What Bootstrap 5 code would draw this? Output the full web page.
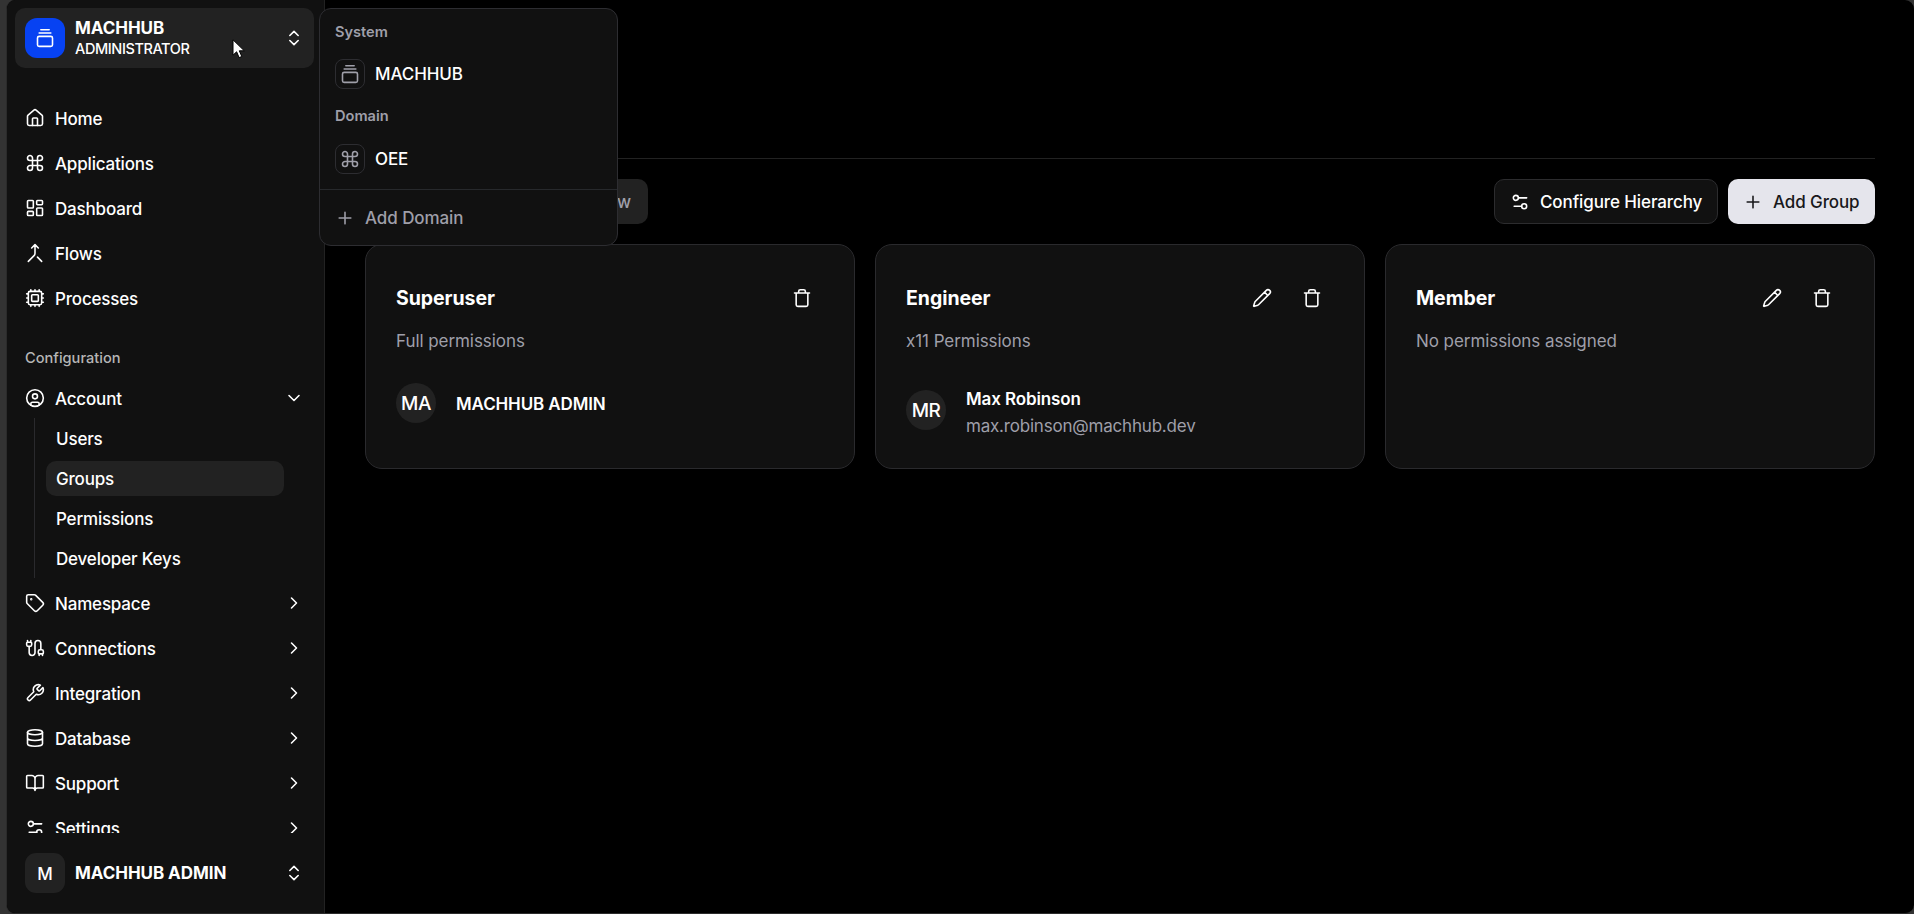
<!DOCTYPE html>
<html lang="en" data-bs-theme="dark">
<head>
<meta charset="utf-8">
<title>MACHHUB – Groups</title>
<link rel="stylesheet" href="https://cdn.jsdelivr.net/npm/bootstrap@5.3.0/dist/css/bootstrap.min.css">
<style>
  :root { --panel:#111111; --raised:#222222; --line:#2a2a2d; --muted:#9f9fa9; }
  html, body { height:100%; }
  body { background:#333; color:#fff; font-family:Inter,"Liberation Sans",sans-serif; font-size:17px; line-height:25px; font-weight:500; letter-spacing:-.18px; overflow:hidden; }
  a { color:inherit; text-decoration:none; }
  svg.ic { width:20px; height:20px; flex:none; fill:none; stroke:currentColor; stroke-width:1.9; stroke-linecap:round; stroke-linejoin:round; display:block; }
  .lbl { padding-top:2px; line-height:23px; white-space:nowrap; }
  .window { margin-left:6px; height:914px; background:#000; border:solid #2b2b2b; border-width:0 0 1px 1px; border-radius:9px; overflow:hidden; }
  .sidebar { width:318px; flex:none; background:var(--panel); border-right:1px solid var(--raised); }
  .team { margin:8px 10px 0 8px; height:60px; padding:0 10px; background:var(--raised); border-radius:10px; }
  .logo { width:40px; height:40px; border-radius:12px; background:#0742f2; }
  .team-text { padding-left:10px; }
  .team-name { font-weight:700; line-height:21px; letter-spacing:-.05px; padding-top:1px; }
  .team-role { font-size:14.5px; line-height:20px; letter-spacing:-.4px; }
  .tree { height:765px; overflow:hidden; padding:30px 20px 0 18px; }
  .tree-item { height:40px; margin-bottom:5px; gap:10px; }
  .group-label { height:40px; margin:20px 0 0; font-size:14.6px; color:#b6b6b6; letter-spacing:0; }
  .subtree { margin:0 20px 5px 9px; height:160px; padding:2.5px 0 0 11px; border-left:1px solid var(--line); }
  .subtree a { height:35px; margin-bottom:5px; padding-left:10px; border-radius:10px; }
  .subtree a.current { background:var(--raised); }
  .account { height:80px; padding:0 20px 0 18px; }
  .initial { width:40px; height:40px; background:var(--raised); border-radius:11px; }
  .content-area { padding:158px 39px 0 40px; min-width:0; }
  .toolbar { border-top:1px solid var(--raised); padding-top:20px; height:86px; }
  .switcher { width:283px; height:45px; padding:0 17px; background:var(--raised); border-radius:10px; color:var(--muted); }
  .btn.act { height:45px; padding:0 15px; border-radius:10px; font:inherit; font-weight:500; letter-spacing:-.1px; gap:10px; }
  .act-outline { width:224px; background:var(--panel); border:1px solid #2c2c2e; color:#fff; }
  .act-fill { width:147px; background:#e5e5ec; color:#18181b; border:0; }
  .tiles { display:grid; grid-template-columns:repeat(3,1fr); gap:20px; }
  .tile { height:225px; background:var(--panel); border:1px solid var(--line); border-radius:17px; padding:30px; }
  .tile-title { font-size:19.5px; font-weight:700; margin:0; letter-spacing:-.05px; line-height:25px; }
  .tile-head { height:46px; padding-right:12px; }
  .tile-head .tools { gap:30px; }
  .desc, .mail { font-weight:400; color:var(--muted); }
  .desc { margin:8px 0 29px; line-height:25px; letter-spacing:-.06px; }
  .member { gap:20px; }
  .face { width:40px; height:40px; border-radius:50%; background:var(--raised); font-size:19px; letter-spacing:-.5px; flex:none; }
  .who { font-weight:600; line-height:27px; letter-spacing:-.12px; }
  .who-pair { margin:3px 0 -3px; }
  .who .mail { line-height:27px; letter-spacing:-.2px; }
  .switch-menu { position:absolute; left:319px; top:8px; width:299px; height:238px; padding:5px 0; background:var(--panel); border:1px solid #2d2d31; border-radius:12px; }
  .menu-label { height:35px; padding-left:15px; font-size:14.6px; font-weight:600; color:var(--muted); letter-spacing:0; }
  .menu-label.first { padding-top:2px; }
  .menu-item { height:50px; padding-left:15px; gap:10px; }
  .menu-item .lbl { letter-spacing:-.08px; padding-top:0; }
  .menu-add { color:var(--muted); }
  .chip { width:30px; height:30px; border:1px solid #2d2d31; border-radius:8px; color:var(--muted); }
  .menu-rule { border-top:1px solid #27292c; margin:5px 0 3px; }
  .pointer { position:absolute; left:232px; top:39px; width:15px; height:20px; }
</style>
</head>
<body>
<svg width="0" height="0" class="position-absolute">
  <symbol id="stack" viewBox="0 0 24 24"><path d="M7 2h10M5 6h14"/><rect width="18" height="12" x="3" y="10" rx="2"/></symbol>
  <symbol id="updown" viewBox="0 0 24 24"><path d="m7 15 5 5 5-5M7 9l5-5 5 5"/></symbol>
  <symbol id="right" viewBox="0 0 24 24"><path d="m9 18 6-6-6-6"/></symbol>
  <symbol id="down" viewBox="0 0 24 24"><path d="m6 9 6 6 6-6"/></symbol>
  <symbol id="home" viewBox="0 0 24 24"><path d="M15 21v-8a1 1 0 0 0-1-1h-4a1 1 0 0 0-1 1v8"/><path d="M3 10a2 2 0 0 1 .709-1.528l7-5.999a2 2 0 0 1 2.582 0l7 5.999A2 2 0 0 1 21 10v9a2 2 0 0 1-2 2H5a2 2 0 0 1-2-2z"/></symbol>
  <symbol id="command" viewBox="0 0 24 24"><path d="M15 6v12a3 3 0 1 0 3-3H6a3 3 0 1 0 3 3V6a3 3 0 1 0-3 3h12a3 3 0 1 0-3-3"/></symbol>
  <symbol id="dash" viewBox="0 0 24 24"><rect width="7" height="9" x="3" y="3" rx="1"/><rect width="7" height="5" x="14" y="3" rx="1"/><rect width="7" height="9" x="14" y="12" rx="1"/><rect width="7" height="5" x="3" y="16" rx="1"/></symbol>
  <symbol id="merge" viewBox="0 0 24 24"><path d="m8 6 4-4 4 4M12 2v10.3a4 4 0 0 1-1.172 2.872L4 22M20 22l-5-5"/></symbol>
  <symbol id="cpu" viewBox="0 0 24 24"><path d="M12 20v2M12 2v2M17 20v2M17 2v2M2 12h2M2 17h2M2 7h2M20 12h2M20 17h2M20 7h2M7 20v2M7 2v2"/><rect x="4" y="4" width="16" height="16" rx="2"/><rect x="8" y="8" width="8" height="8" rx="1"/></symbol>
  <symbol id="user" viewBox="0 0 24 24"><circle cx="12" cy="12" r="10"/><circle cx="12" cy="10" r="3"/><path d="M7 20.662V19a2 2 0 0 1 2-2h6a2 2 0 0 1 2 2v1.662"/></symbol>
  <symbol id="tag" viewBox="0 0 24 24"><path d="M12.586 2.586A2 2 0 0 0 11.172 2H4a2 2 0 0 0-2 2v7.172a2 2 0 0 0 .586 1.414l8.704 8.704a2.426 2.426 0 0 0 3.42 0l6.58-6.58a2.426 2.426 0 0 0 0-3.42z"/><circle cx="7.5" cy="7.5" r=".5" fill="currentColor"/></symbol>
  <symbol id="cable" viewBox="0 0 24 24"><path d="M17 19a1 1 0 0 1-1-1v-2a2 2 0 0 1 2-2h2a2 2 0 0 1 2 2v2a1 1 0 0 1-1 1zM17 21v-2M19 14V6.5a1 1 0 0 0-7 0v11a1 1 0 0 1-7 0V10M21 21v-2M3 5V3M4 10a2 2 0 0 1-2-2V6a1 1 0 0 1 1-1h4a1 1 0 0 1 1 1v2a2 2 0 0 1-2 2zM7 5V3"/></symbol>
  <symbol id="wrench" viewBox="0 0 24 24"><path d="M14.7 6.3a1 1 0 0 0 0 1.4l1.6 1.6a1 1 0 0 0 1.4 0l3.77-3.77a6 6 0 0 1-7.94 7.94l-6.91 6.91a2.12 2.12 0 0 1-3-3l6.91-6.91a6 6 0 0 1 7.94-7.94l-3.76 3.76z"/></symbol>
  <symbol id="db" viewBox="0 0 24 24"><ellipse cx="12" cy="5" rx="9" ry="3"/><path d="M3 5V19A9 3 0 0 0 21 19V5M3 12A9 3 0 0 0 21 12"/></symbol>
  <symbol id="book" viewBox="0 0 24 24"><path d="M12 7v14M3 18a1 1 0 0 1-1-1V4a1 1 0 0 1 1-1h5a4 4 0 0 1 4 4 4 4 0 0 1 4-4h5a1 1 0 0 1 1 1v13a1 1 0 0 1-1 1h-6a3 3 0 0 0-3 3 3 3 0 0 0-3-3z"/></symbol>
  <symbol id="sliders" viewBox="0 0 24 24"><path d="M20 7h-9M14 17H5"/><circle cx="17" cy="17" r="3"/><circle cx="7" cy="7" r="3"/></symbol>
  <symbol id="plus" viewBox="0 0 24 24"><path d="M5 12h14M12 5v14"/></symbol>
  <symbol id="trash" viewBox="0 0 24 24"><path d="M3 6h18M19 6v14c0 1-1 2-2 2H7c-1 0-2-1-2-2V6M8 6V4c0-1 1-2 2-2h4c1 0 2 1 2 2v2"/></symbol>
  <symbol id="pencil" viewBox="0 0 24 24"><path d="M21.174 6.812a1 1 0 0 0-3.986-3.987L3.842 16.174a2 2 0 0 0-.5.83l-1.321 4.352a.5.5 0 0 0 .623.622l4.353-1.32a2 2 0 0 0 .83-.497zM15 5l4 4"/></symbol>
</svg>

<div class="window d-flex">
  <aside class="sidebar d-flex flex-column">
    <div class="team d-flex align-items-center">
      <span class="logo d-flex align-items-center justify-content-center"><svg class="ic"><use href="#stack"/></svg></span>
      <div class="team-text flex-grow-1">
        <div class="team-name">MACHHUB</div>
        <div class="team-role">ADMINISTRATOR</div>
      </div>
      <svg class="ic"><use href="#updown"/></svg>
    </div>
    <nav class="tree">
      <a href="#" class="tree-item d-flex align-items-center"><svg class="ic"><use href="#home"/></svg><span class="lbl">Home</span></a>
      <a href="#" class="tree-item d-flex align-items-center"><svg class="ic"><use href="#command"/></svg><span class="lbl">Applications</span></a>
      <a href="#" class="tree-item d-flex align-items-center"><svg class="ic"><use href="#dash"/></svg><span class="lbl">Dashboard</span></a>
      <a href="#" class="tree-item d-flex align-items-center"><svg class="ic"><use href="#merge"/></svg><span class="lbl">Flows</span></a>
      <a href="#" class="tree-item d-flex align-items-center"><svg class="ic"><use href="#cpu"/></svg><span class="lbl">Processes</span></a>
      <div class="group-label d-flex align-items-center">Configuration</div>
      <a href="#" class="tree-item d-flex align-items-center mb-0"><svg class="ic"><use href="#user"/></svg><span class="lbl flex-grow-1">Account</span><svg class="ic"><use href="#down"/></svg></a>
      <div class="subtree">
        <a href="#" class="d-flex align-items-center"><span class="lbl">Users</span></a>
        <a href="#" class="d-flex align-items-center current"><span class="lbl">Groups</span></a>
        <a href="#" class="d-flex align-items-center"><span class="lbl">Permissions</span></a>
        <a href="#" class="d-flex align-items-center"><span class="lbl">Developer Keys</span></a>
      </div>
      <a href="#" class="tree-item d-flex align-items-center"><svg class="ic"><use href="#tag"/></svg><span class="lbl flex-grow-1">Namespace</span><svg class="ic"><use href="#right"/></svg></a>
      <a href="#" class="tree-item d-flex align-items-center"><svg class="ic"><use href="#cable"/></svg><span class="lbl flex-grow-1">Connections</span><svg class="ic"><use href="#right"/></svg></a>
      <a href="#" class="tree-item d-flex align-items-center"><svg class="ic"><use href="#wrench"/></svg><span class="lbl flex-grow-1">Integration</span><svg class="ic"><use href="#right"/></svg></a>
      <a href="#" class="tree-item d-flex align-items-center"><svg class="ic"><use href="#db"/></svg><span class="lbl flex-grow-1">Database</span><svg class="ic"><use href="#right"/></svg></a>
      <a href="#" class="tree-item d-flex align-items-center"><svg class="ic"><use href="#book"/></svg><span class="lbl flex-grow-1">Support</span><svg class="ic"><use href="#right"/></svg></a>
      <a href="#" class="tree-item d-flex align-items-center"><svg class="ic"><use href="#sliders"/></svg><span class="lbl flex-grow-1">Settings</span><svg class="ic"><use href="#right"/></svg></a>
    </nav>
    <div class="account d-flex align-items-center">
      <span class="initial d-flex align-items-center justify-content-center"><span class="lbl">M</span></span>
      <div class="team-text flex-grow-1"><div class="team-name pt-0">MACHHUB ADMIN</div></div>
      <svg class="ic"><use href="#updown"/></svg>
    </div>
  </aside>

  <main class="content-area flex-grow-1">
    <div class="toolbar d-flex">
      <div class="switcher d-flex align-items-center justify-content-end me-auto"><span class="lbl">View</span></div>
      <div class="d-flex" style="gap:10px">
        <button class="btn act act-outline d-flex align-items-center"><svg class="ic"><use href="#sliders"/></svg><span class="lbl">Configure Hierarchy</span></button>
        <button class="btn act act-fill d-flex align-items-center"><svg class="ic"><use href="#plus"/></svg><span class="lbl">Add Group</span></button>
      </div>
    </div>
    <div class="tiles">
      <section class="tile">
        <div class="tile-head d-flex align-items-center justify-content-between"><h2 class="tile-title">Superuser</h2><div class="tools d-flex"><svg class="ic"><use href="#trash"/></svg></div></div>
        <p class="desc">Full permissions</p>
        <div class="member d-flex align-items-center"><span class="face d-flex align-items-center justify-content-center">MA</span><div class="who lbl">MACHHUB ADMIN</div></div>
      </section>
      <section class="tile">
        <div class="tile-head d-flex align-items-center justify-content-between"><h2 class="tile-title">Engineer</h2><div class="tools d-flex"><svg class="ic"><use href="#pencil"/></svg><svg class="ic"><use href="#trash"/></svg></div></div>
        <p class="desc">x11 Permissions</p>
        <div class="member d-flex align-items-center"><span class="face d-flex align-items-center justify-content-center">MR</span><div class="who who-pair">Max Robinson<div class="mail">max.robinson@machhub.dev</div></div></div>
      </section>
      <section class="tile">
        <div class="tile-head d-flex align-items-center justify-content-between"><h2 class="tile-title">Member</h2><div class="tools d-flex"><svg class="ic"><use href="#pencil"/></svg><svg class="ic"><use href="#trash"/></svg></div></div>
        <p class="desc">No permissions assigned</p>
      </section>
    </div>
  </main>
</div>

<div class="switch-menu">
  <div class="menu-label first d-flex align-items-center">System</div>
  <div class="menu-item d-flex align-items-center"><span class="chip d-flex align-items-center justify-content-center"><svg class="ic"><use href="#stack"/></svg></span><span class="lbl">MACHHUB</span></div>
  <div class="menu-label d-flex align-items-center">Domain</div>
  <div class="menu-item d-flex align-items-center"><span class="chip d-flex align-items-center justify-content-center"><svg class="ic"><use href="#command"/></svg></span><span class="lbl">OEE</span></div>
  <div class="menu-rule"></div>
  <div class="menu-item menu-add d-flex align-items-center"><svg class="ic"><use href="#plus"/></svg><span class="lbl">Add Domain</span></div>
</div>
<svg class="pointer" viewBox="0 0 15 20"><path d="M1 .8v15.4l3.6-3.4 2.5 5.8 2.7-1.1-2.5-5.7h5z" fill="#fff" stroke="#000" stroke-width="1"/></svg>
<script src="https://cdn.jsdelivr.net/npm/bootstrap@5.3.0/dist/js/bootstrap.bundle.min.js"></script>
</body>
</html>
